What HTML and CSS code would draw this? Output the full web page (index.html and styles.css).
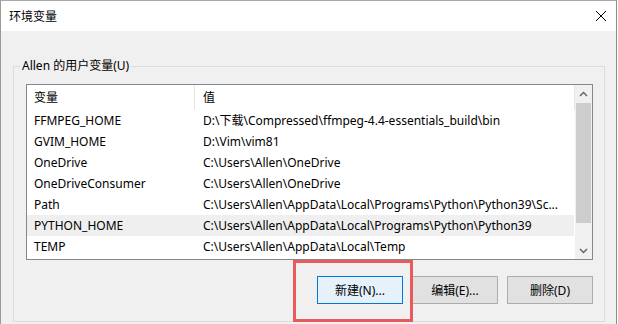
FILE: index.html
```html
<!DOCTYPE html>
<html lang="zh-CN">
<head>
<meta charset="utf-8">
<title>环境变量</title>
<link rel="stylesheet" href="styles.css">
</head>
<body>
<div class="window">
  <div class="titlebar">
    <span class="title">环境变量</span>
    <span class="close" aria-label="关闭">
      <svg width="12" height="12" viewBox="0 0 12 12"><path d="M1 1 L11 11 M11 1 L1 11" stroke="#000" stroke-width="1" fill="none"/></svg>
    </span>
  </div>
  <div class="content">
    <fieldset class="group">
      <legend>Allen 的用户变量(U)</legend>
      <div class="list">
        <div class="list-main">
          <div class="header">
            <div class="col1">变量</div>
            <div class="col2">值</div>
          </div>
          <div class="row"><div class="col1">FFMPEG_HOME</div><div class="col2">D:\下载\Compressed\ffmpeg-4.4-essentials_build\bin</div></div>
          <div class="row"><div class="col1">GVIM_HOME</div><div class="col2">D:\Vim\vim81</div></div>
          <div class="row"><div class="col1">OneDrive</div><div class="col2">C:\Users\Allen\OneDrive</div></div>
          <div class="row"><div class="col1">OneDriveConsumer</div><div class="col2">C:\Users\Allen\OneDrive</div></div>
          <div class="row"><div class="col1">Path</div><div class="col2">C:\Users\Allen\AppData\Local\Programs\Python\Python39\Sc...</div></div>
          <div class="row selected"><div class="col1">PYTHON_HOME</div><div class="col2">C:\Users\Allen\AppData\Local\Programs\Python\Python39</div></div>
          <div class="row"><div class="col1">TEMP</div><div class="col2">C:\Users\Allen\AppData\Local\Temp</div></div>
        </div>
        <div class="scrollbar">
          <div class="sb-btn">
            <svg width="9" height="6" viewBox="0 0 9 6"><path d="M1 5 L4.5 1.5 L8 5" stroke="#606060" stroke-width="1.4" fill="none"/></svg>
          </div>
          <div class="sb-track"><div class="sb-thumb"></div></div>
          <div class="sb-btn">
            <svg width="9" height="6" viewBox="0 0 9 6"><path d="M1 1 L4.5 4.5 L8 1" stroke="#606060" stroke-width="1.4" fill="none"/></svg>
          </div>
        </div>
      </div>
      <div class="buttons">
        <button class="btn btn-default">新建(N)...</button>
        <button class="btn">编辑(E)...</button>
        <button class="btn">删除(D)</button>
      </div>
    </fieldset>
  </div>
  <div class="annot"></div>
</div>
</body>
</html>
```

FILE: styles.css
```css
* { box-sizing: border-box; }

html, body {
  margin: 0;
  padding: 0;
  background: #ffffff;
}

body {
  width: 618px;
  height: 324px;
  overflow: hidden;
  font-family: "Noto Sans", "Noto Sans CJK SC", sans-serif;
  font-size: 12px;
  color: #000;
}

.window {
  position: relative;
  width: 617px;
  height: 324px;
  border-top: 1px solid #a8a8a8;
  border-left: 1px solid #9a9a9a;
  border-right: 1px solid #8c8c8c;
  background: #f0f0f0;
  display: flex;
  flex-direction: column;
}

.titlebar {
  height: 30px;
  background: #ffffff;
  display: flex;
  align-items: center;
  justify-content: space-between;
  padding: 0 8px 0 8px;
  flex: none;
}

.title {
  font-size: 12px;
  line-height: 16px;
  padding-top: 1px;
}

.close {
  display: flex;
  width: 12px;
  height: 12px;
  margin-right: 1px;
}

.content {
  flex: 1;
  padding: 27px 0 0 12px;
}

.group {
  margin: 0;
  width: 592px;
  border: 1px solid #dcdcdc;
  padding: 10px 11px 17px 6px;
  min-width: 0;
}

.group legend {
  padding: 0 2px;
  line-height: 16px;
  font-size: 12px;
}

.list {
  margin-left: 6px;
  height: 176px;
  border: 1px solid #828790;
  background: #ffffff;
  display: flex;
}

.list-main {
  flex: 1;
  min-width: 0;
}

.header {
  height: 25px;
  display: flex;
  align-items: stretch;
}

.header .col1 {
  border-right: 1px solid #e5e5e5;
}

.header .col2 {
  border-right: 1px solid #e5e5e5;
}

.col1 {
  width: 168px;
  flex: none;
  padding-left: 7px;
  white-space: nowrap;
  overflow: hidden;
}

.col2 {
  flex: 1;
  min-width: 0;
  padding-left: 8px;
  white-space: nowrap;
  overflow: hidden;
}

.header .col1,
.header .col2 {
  line-height: 25px;
}

.row {
  height: 21px;
  line-height: 21px;
  display: flex;
}

.row .col1 {
  width: 168px;
}

.row .col2 {
  padding-left: 8px;
}

.row.selected {
  background: #efefef;
  margin-right: 1px;
}

.scrollbar {
  width: 17px;
  flex: none;
  background: #f0f0f0;
  display: flex;
  flex-direction: column;
}

.sb-btn {
  height: 17px;
  flex: none;
  display: flex;
  align-items: center;
  justify-content: center;
}

.sb-track {
  flex: 1;
  padding: 1px 1px 0 1px;
}

.sb-thumb {
  height: 120px;
  background: #cdcdcd;
}

.buttons {
  margin-top: 16px;
  display: flex;
  justify-content: flex-end;
  gap: 9px;
}

.btn {
  width: 86px;
  height: 28px;
  margin: 0;
  padding: 0;
  font-family: "Noto Sans", "Noto Sans CJK SC", sans-serif;
  font-size: 12px;
  color: #000;
  background: #e1e1e1;
  border: 1px solid #adadad;
  border-radius: 0;
}

.btn-default {
  background: #e5f1fb;
  border-color: #0078d7;
}

.annot {
  position: absolute;
  left: 292px;
  top: 259px;
  width: 120px;
  height: 62px;
  border: 3px solid #e85a5c;
  pointer-events: none;
}
```
